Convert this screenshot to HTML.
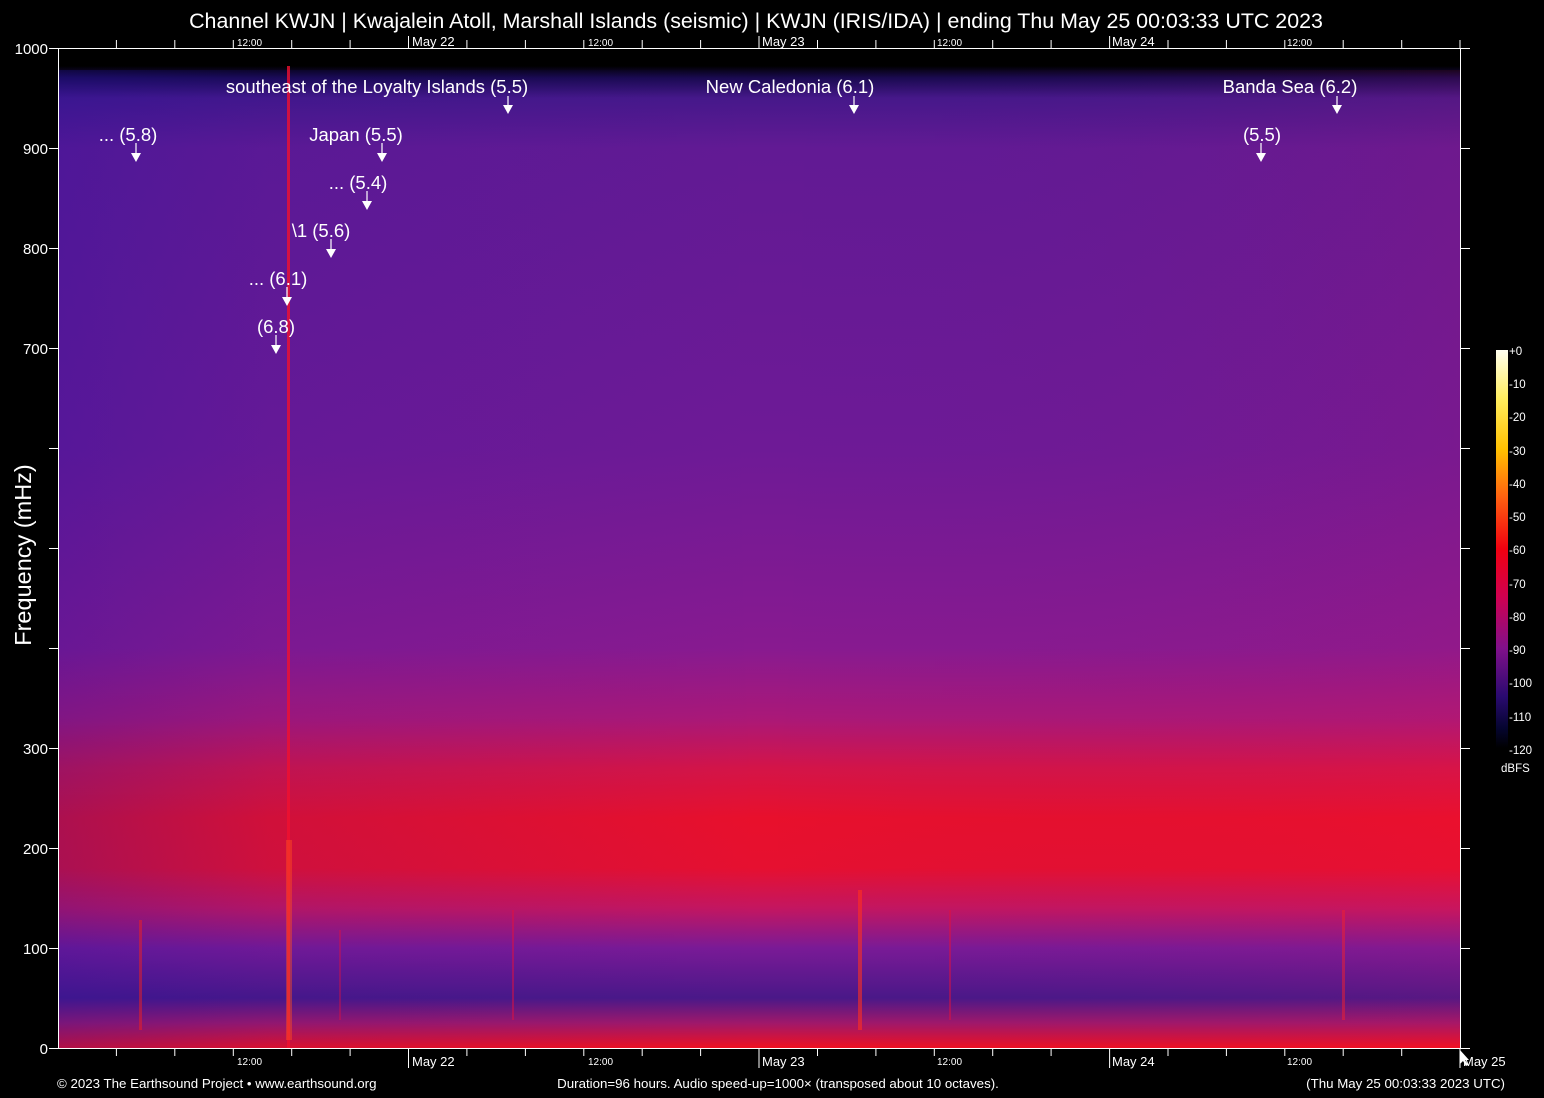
<!DOCTYPE html>
<html><head><meta charset="utf-8"><style>
html,body{margin:0;padding:0;background:#000;width:1544px;height:1098px;overflow:hidden}
svg{display:block}
text{font-family:"Liberation Sans",sans-serif;fill:#fff}
</style></head><body>
<svg width="1544" height="1098" viewBox="0 0 1544 1098" xmlns="http://www.w3.org/2000/svg">
<defs>
<linearGradient id="v" x1="0" y1="0" x2="0" y2="1">
<stop offset="0" stop-color="#000"/>
<stop offset="0.018" stop-color="#000"/>
<stop offset="0.03" stop-color="#1a0a50"/>
<stop offset="0.05" stop-color="#46188a"/>
<stop offset="0.1" stop-color="#621a94"/>
<stop offset="0.4" stop-color="#6e1a96"/>
<stop offset="0.6" stop-color="#881a90"/>
<stop offset="0.67" stop-color="#aa1878"/>
<stop offset="0.72" stop-color="#d41448"/>
<stop offset="0.77" stop-color="#e8102c"/>
<stop offset="0.82" stop-color="#e61030"/>
<stop offset="0.86" stop-color="#c41660"/>
<stop offset="0.9" stop-color="#7a1a96"/>
<stop offset="0.95" stop-color="#4a1888"/>
<stop offset="0.975" stop-color="#a0186a"/>
<stop offset="1" stop-color="#f01020"/>
</linearGradient>
<linearGradient id="h" x1="0" y1="0" x2="1" y2="0">
<stop offset="0" stop-color="#2010a0" stop-opacity="0.3"/>
<stop offset="0.15" stop-color="#2010a0" stop-opacity="0.12"/>
<stop offset="0.5" stop-color="#2010a0" stop-opacity="0"/>
<stop offset="1" stop-color="#ff1040" stop-opacity="0.08"/>
</linearGradient>
<linearGradient id="cb" x1="0" y1="0" x2="0" y2="1">
<stop offset="0" stop-color="#fffff0"/>
<stop offset="0.12" stop-color="#ffee60"/>
<stop offset="0.25" stop-color="#ffc000"/>
<stop offset="0.37" stop-color="#ff6010"/>
<stop offset="0.5" stop-color="#f00010"/>
<stop offset="0.62" stop-color="#d00050"/>
<stop offset="0.75" stop-color="#80108a"/>
<stop offset="0.87" stop-color="#2a0a70"/>
<stop offset="0.95" stop-color="#050530"/>
<stop offset="1" stop-color="#000"/>
</linearGradient>
</defs>
<rect x="58" y="48" width="1402" height="1000" fill="url(#v)"/>
<rect x="58" y="70" width="1402" height="978" fill="url(#h)"/>
<!-- event streaks -->
<rect x="287" y="66" width="3" height="982" fill="#f01030" opacity="0.8"/>
<rect x="286" y="840" width="6" height="200" fill="#ff5020" opacity="0.45"/>
<rect x="139" y="920" width="3" height="110" fill="#f02020" opacity="0.5"/>
<rect x="858" y="890" width="4" height="140" fill="#ff3020" opacity="0.6"/>
<rect x="512" y="910" width="2" height="110" fill="#e01040" opacity="0.5"/>
<rect x="949" y="910" width="2" height="110" fill="#e01040" opacity="0.5"/>
<rect x="1342" y="910" width="3" height="110" fill="#f02030" opacity="0.5"/>
<rect x="339" y="930" width="2" height="90" fill="#e01040" opacity="0.4"/>
<!-- axes -->
<g stroke="#fff" stroke-width="1" fill="none">
<path d="M58.5 48V1048M1460.5 48V1048M58 48.5H1470M58 1048.5H1470"/>
<path d="M116.4 48v-8M174.8 48v-8M233.3 48v-8M291.7 48v-8M350.1 48v-8M408.5 48v-12M466.9 48v-8M525.4 48v-8M583.8 48v-8M642.2 48v-8M700.6 48v-8M759 48v-12M817.5 48v-8M875.9 48v-8M934.3 48v-8M992.7 48v-8M1051.1 48v-8M1109.6 48v-12M1168 48v-8M1226.4 48v-8M1284.8 48v-8M1343.2 48v-8M1401.7 48v-8M1460 48v-8"/>
<path d="M116.4 1048v8M174.8 1048v8M233.3 1048v8M291.7 1048v8M350.1 1048v8M408.5 1048v20M466.9 1048v8M525.4 1048v8M583.8 1048v8M642.2 1048v8M700.6 1048v8M759 1048v20M817.5 1048v8M875.9 1048v8M934.3 1048v8M992.7 1048v8M1051.1 1048v8M1109.6 1048v20M1168 1048v8M1226.4 1048v8M1284.8 1048v8M1343.2 1048v8M1401.7 1048v8M1460 1048v20"/>
<path d="M49 48.5h9M49 148.5h9M49 248.5h9M49 348.5h9M49 448.5h9M49 548.5h9M49 648.5h9M49 748.5h9M49 848.5h9M49 948.5h9M49 1048.5h9"/>
<path d="M1460 148.5h10M1460 248.5h10M1460 348.5h10M1460 448.5h10M1460 548.5h10M1460 648.5h10M1460 748.5h10M1460 848.5h10M1460 948.5h10"/>
</g>
<g font-size="15" text-anchor="end">
<text x="48" y="54">1000</text><text x="48" y="154">900</text><text x="48" y="254">800</text><text x="48" y="354">700</text>
<text x="48" y="754">300</text><text x="48" y="854">200</text><text x="48" y="954">100</text><text x="48" y="1054">0</text>
</g>
<text transform="translate(31,555) rotate(-90)" font-size="23.5" text-anchor="middle">Frequency (mHz)</text>
<text x="756" y="28" font-size="21.4" text-anchor="middle">Channel KWJN | Kwajalein Atoll, Marshall Islands (seismic) | KWJN (IRIS/IDA) | ending Thu May 25 00:03:33 UTC 2023</text>
<g font-size="10"><text x="237" y="46">12:00</text><text x="588" y="46">12:00</text><text x="937" y="46">12:00</text><text x="1287" y="46">12:00</text>
<text x="237" y="1065">12:00</text><text x="588" y="1065">12:00</text><text x="937" y="1065">12:00</text><text x="1287" y="1065">12:00</text></g>
<g font-size="13"><text x="412" y="46">May 22</text><text x="762" y="46">May 23</text><text x="1112" y="46">May 24</text>
<text x="412" y="1066">May 22</text><text x="762" y="1066">May 23</text><text x="1112" y="1066">May 24</text><text x="1463" y="1066">May 25</text></g>
<g font-size="13.3"><text x="57" y="1088">© 2023 The Earthsound Project • www.earthsound.org</text>
<text x="778" y="1088" text-anchor="middle">Duration=96 hours. Audio speed-up=1000× (transposed about 10 octaves).</text>
<text x="1505" y="1088" text-anchor="end">(Thu May 25 00:03:33 2023 UTC)</text></g>
<!-- colorbar -->
<rect x="1496" y="350" width="12" height="398" fill="url(#cb)"/>
<g font-size="11.5" fill="#ddd"><text x="1509" y="355">+0</text><text x="1509" y="388">-10</text><text x="1509" y="421">-20</text><text x="1509" y="455">-30</text><text x="1509" y="488">-40</text><text x="1509" y="521">-50</text><text x="1509" y="554">-60</text><text x="1509" y="588">-70</text><text x="1509" y="621">-80</text><text x="1509" y="654">-90</text><text x="1509" y="687">-100</text><text x="1509" y="721">-110</text><text x="1509" y="754">-120</text><text x="1501" y="772">dBFS</text></g>
<!-- annotations -->
<g font-size="18.5" text-anchor="middle">
<text x="377" y="93">southeast of the Loyalty Islands (5.5)</text>
<text x="790" y="93">New Caledonia (6.1)</text>
<text x="1290" y="93">Banda Sea (6.2)</text>
<text x="128" y="141">... (5.8)</text>
<text x="356" y="141">Japan (5.5)</text>
<text x="1262" y="141">(5.5)</text>
<text x="358" y="189">... (5.4)</text>
<text x="321" y="237">\1 (5.6)</text>
<text x="278" y="285">... (6.1)</text>
<text x="276" y="333">(6.8)</text>
</g>
<g stroke="#fff" stroke-width="1.2">
<path d="M508 96v10M854 96v10M1337 96v10M136 143v11M382 143v11M1261 143v11M367 191v11M331 239v11M287 287v11M276 335v11"/>
</g>
<g fill="#fff">
<path d="M503 105h10l-5 9z"/><path d="M849 105h10l-5 9z"/><path d="M1332 105h10l-5 9z"/>
<path d="M131 153h10l-5 9z"/><path d="M377 153h10l-5 9z"/><path d="M1256 153h10l-5 9z"/>
<path d="M362 201h10l-5 9z"/><path d="M326 249h10l-5 9z"/><path d="M282 297h10l-5 9z"/><path d="M271 345h10l-5 9z"/>
<path d="M1460 1050l0 14 3-3 3 5 2-1-3-5h4z"/>
</g>
</svg>
</body></html>
